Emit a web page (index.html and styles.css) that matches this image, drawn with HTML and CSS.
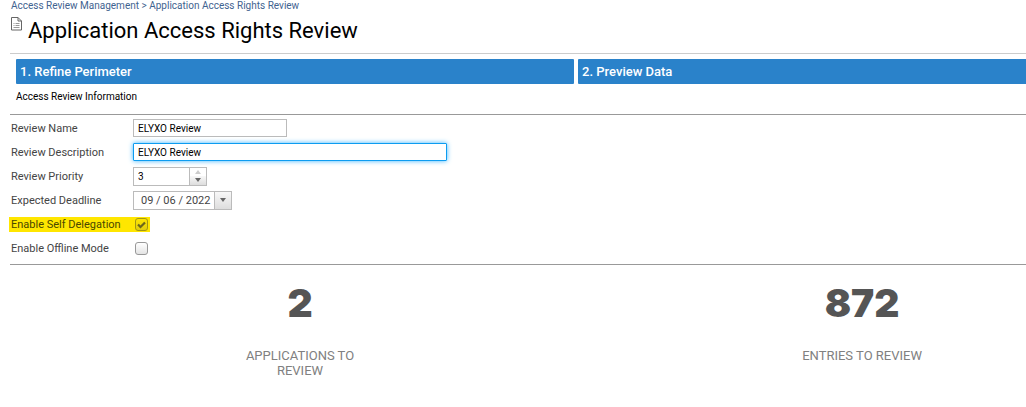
FILE: index.html
```html
<!DOCTYPE html>
<html lang="en">
<head>
<meta charset="utf-8">
<title>Application Access Rights Review</title>
<link rel="stylesheet" href="styles.css">
</head>
<body>
<header class="page-header">
  <nav class="breadcrumb"><a href="#">Access Review Management</a> &gt; <a href="#">Application Access Rights Review</a></nav>
  <div class="title-row">
    <svg class="doc-icon" viewBox="0 0 11 14" aria-hidden="true">
      <path d="M.5 .5h6.500l3.500 3.500v9H.5z" fill="#fff" stroke="#666"/>
      <path d="M7 .5v3.500h3.500" fill="none" stroke="#666"/>
      <path d="M2.500 6.500h1m1 0h4M2.500 8.500h1m1 0h4M2.500 10.500h6" fill="none" stroke="#999"/>
    </svg>
    <h1 class="title">Application Access Rights Review</h1>
  </div>
</header>
<main class="content">
  <ol class="steps">
    <li class="step">1. Refine Perimeter</li>
    <li class="step">2. Preview Data</li>
  </ol>
  <h2 class="section-title">Access Review Information</h2>
  <form class="form">
    <div class="row">
      <label class="label" for="name">Review Name</label>
      <input class="text name" id="name" type="text" value="ELYXO Review">
    </div>
    <div class="row">
      <label class="label" for="desc">Review Description</label>
      <input class="text desc" id="desc" type="text" value="ELYXO Review">
    </div>
    <div class="row">
      <label class="label" for="priority">Review Priority</label>
      <div class="spinner">
        <input class="plain" id="priority" type="text" value="3">
        <div class="arrows">
          <button class="arrow up" type="button" aria-label="Increase"><svg viewBox="0 0 6 4" width="6" height="4"><path d="M0 4L3 0l3 4z" fill="#ccc"/></svg></button>
          <button class="arrow" type="button" aria-label="Decrease"><svg viewBox="0 0 6 4" width="6" height="4"><path d="M0 0h6L3 4z" fill="#666"/></svg></button>
        </div>
      </div>
    </div>
    <div class="row">
      <label class="label" for="deadline">Expected Deadline</label>
      <div class="date">
        <input class="plain date-value" id="deadline" type="text" value="09 / 06 / 2022">
        <button class="date-button" type="button" aria-label="Open calendar"><svg viewBox="0 0 6 4" width="6" height="4"><path d="M0 0h6L3 4z" fill="#666"/></svg></button>
      </div>
    </div>
    <div class="row">
      <div class="highlight">
        <label class="label" for="self">Enable Self Delegation</label>
        <input class="check" id="self" type="checkbox" checked>
        <svg class="tick" viewBox="0 0 9 8" aria-hidden="true"><path d="M1 3.500l2.500 2.500L8 1.500" fill="none" stroke="#6b661c" stroke-width="2.200"/></svg>
      </div>
    </div>
    <div class="row">
      <label class="label" for="offline">Enable Offline Mode</label>
      <input class="check" id="offline" type="checkbox">
    </div>
  </form>
  <section class="stats">
    <div class="stat">
      <strong class="number">2</strong>
      <span class="caption">APPLICATIONS TO REVIEW</span>
    </div>
    <div class="stat">
      <strong class="number">872</strong>
      <span class="caption">ENTRIES TO REVIEW</span>
    </div>
  </section>
</main>
</body>
</html>
```
FILE: styles.css
```css
* { box-sizing: border-box; }
body {
  margin: 0;
  overflow-x: hidden;
  background: #fff;
  color: #000;
  font-family: Roboto, "Liberation Sans", sans-serif;
  font-size: 11px;
}
.page-header {
  margin-left: 10px;
  padding-bottom: 6px;
  border-bottom: 1px solid #ccc;
}
.breadcrumb {
  height: 14px;
  padding-left: 1px;
  line-height: 12px;
  font-size: 10px;
  color: #3f6390;
}
.breadcrumb a { color: inherit; text-decoration: none; }
.title-row { display: flex; gap: 6px; padding-left: 1px; }
.doc-icon { width: 11px; height: 14px; margin-top: 3px; }
.title {
  margin: 0;
  font-size: 22px;
  font-weight: 400;
  line-height: 33px;
}
.content { overflow: hidden; }
.steps {
  display: grid;
  grid-template-columns: 1fr 1fr;
  gap: 4px;
  width: 112%;
  margin: 5px 0 0;
  padding: 0 13px 0 16px;
  list-style: none;
}
.step {
  padding-left: 4px;
  border-radius: 1px;
  background: #2a82ca;
  color: #fff;
  font-size: 13px;
  font-weight: 500;
  line-height: 25px;
}
.section-title {
  margin: 0 0 0 16px;
  font-size: 10px;
  font-weight: 400;
  line-height: 26px;
}
.form {
  margin: 4px 0 0 10px;
  padding: 1px 0 4px;
  border-top: 1px solid #999;
  border-bottom: 1px solid #999;
}
.row { display: flex; align-items: center; height: 24px; }
.label { flex: none; width: 123px; padding-left: 1px; color: #444; }
.text, .spinner, .date { border: 1px solid #bbb; background: #fff; }
input { font-family: inherit; font-size: 10px; color: #000; }
.text { height: 18px; padding: 0 4px; outline: none; }
.name { width: 154px; }
.desc {
  width: 314px;
  border-color: #0d9cf0;
  border-radius: 1px;
  box-shadow: 0 0 5px #3db5ff;
}
.spinner, .date { display: flex; height: 19px; }
.spinner { width: 74px; }
.date { width: 99px; }
.plain { flex: 1; min-width: 0; padding: 0 4px; border: 0; outline: none; background: none; }
.date-value { padding: 0 0 0 7px; font-size: 11px; color: #444; }
.arrows { display: flex; flex-direction: column; width: 17px; border-left: 1px solid #bbb; }
.arrow, .date-button {
  display: flex;
  align-items: center;
  justify-content: center;
  padding: 0;
  border: 0;
  background: linear-gradient(#f8f8f8, #ddd);
}
.arrow { flex: 1; }
.up { background: #fff; }
.date-button { width: 17px; border-left: 1px solid #bbb; }
.highlight {
  position: relative;
  display: flex;
  align-items: center;
  height: 15px;
  margin-left: -1px;
  padding: 0 2px 0 1px;
  background: #ffe600;
}
.highlight .label { color: #4a4600; }
.check {
  appearance: none;
  width: 13px;
  height: 13px;
  margin: 0 0 0 2px;
  border: 1px solid #999;
  border-radius: 3px;
  background: linear-gradient(#fff, #e4e4e4);
}
.highlight .check { border-color: #a39714; background: linear-gradient(#ffe600, #e0cc10); }
.tick {
  position: absolute;
  right: 4px;
  top: 4px;
  width: 9px;
  height: 8px;
  pointer-events: none;
}
.stats {
  display: grid;
  grid-template-columns: 1fr 1fr;
  width: 112%;
  padding: 14px 6px 0 19px;
}
.stat { display: flex; flex-direction: column; align-items: center; }
.number {
  color: #555;
  font-family: Inter, "Liberation Sans", sans-serif;
  font-size: 39px;
  font-weight: 900;
  line-height: 48px;
}
.caption {
  max-width: 140px;
  margin-top: 21px;
  color: #808080;
  font-size: 13px;
  line-height: 15px;
  text-align: center;
}
```
